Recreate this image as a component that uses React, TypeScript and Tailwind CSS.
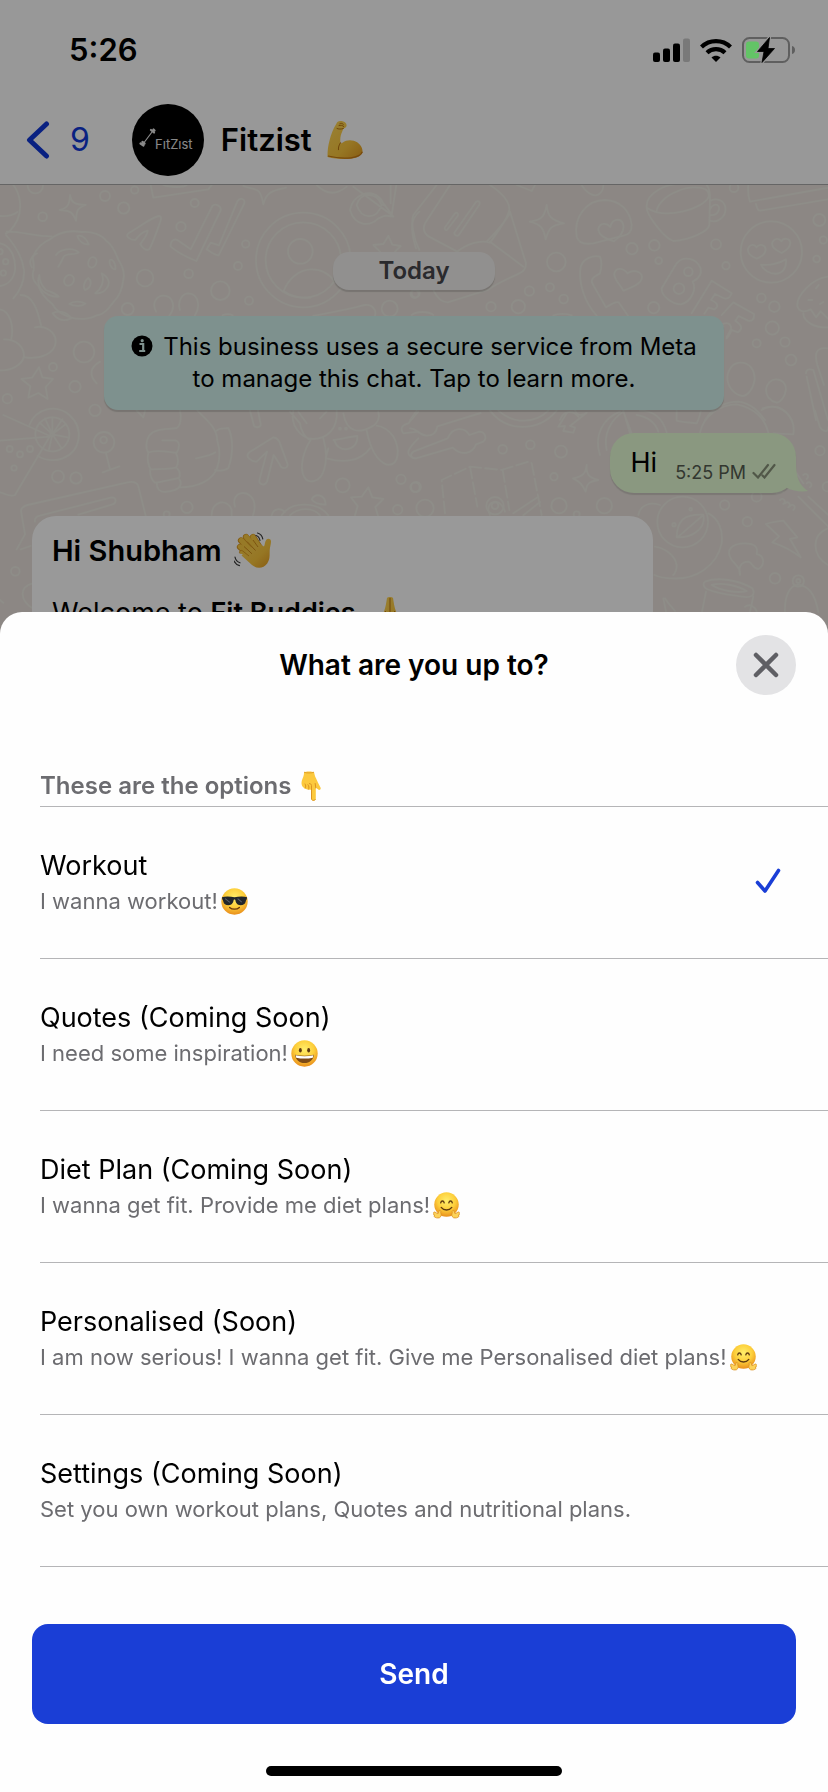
import React, { useState } from "react";

type IconProps = { className?: string };

function EmojiDefs() {
  return (
    <svg width="0" height="0" className="absolute" aria-hidden="true">
      <defs>
        <radialGradient id="face" cx="50%" cy="35%" r="65%">
          <stop offset="0%" stopColor="#ffee6b" />
          <stop offset="55%" stopColor="#fdcf3b" />
          <stop offset="100%" stopColor="#e98f1c" />
        </radialGradient>
        <linearGradient id="skin" x1="0" y1="0" x2="1" y2="1">
          <stop offset="0%" stopColor="#ffd95a" />
          <stop offset="60%" stopColor="#fbc63c" />
          <stop offset="100%" stopColor="#e39a1f" />
        </linearGradient>
      </defs>
    </svg>
  );
}

function Biceps({ className }: IconProps) {
  return (
    <svg viewBox="0 0 36 40" className={className} role="img" aria-label="Flexed biceps">
      <path
        d="M9.5 3.5C10 1.300 12 .6 14.500 1c2.700.4 4.800 1.800 5.100 4 .2 1.900-1.200 3-3.200 3.500-.8 2.500-2 4.600-2.600 7-.6 2.500-.7 5-.3 7.200.5 1 1.200.7 2.300-.2 2.900-2.300 7.200-2.700 11-1.700 4.800 1.300 8.700 5.700 8.700 10.500 0 3.600-4.500 6.700-11.500 7.500-7.500.8-16.500 0-23.500-1.800 0-6.500.6-11.500 2.200-17.200C4 14.800 5.800 9.200 9.500 3.500z"
        fill="url(#skin)"
      />
      <path d="M1 36c7 1.800 15.500 2.600 23 1.800 6.500-.8 10.500-3.300 11.400-6" fill="none" stroke="#c97b14" strokeWidth="1.200" />
      <path d="M10 8.500c1.500.8 4 .8 6.400 0M12.800 3.700c1.200-.8 2.500-.3 3.500.6M13.500 22.700c-1.400 2-2.300 4.500-2.100 7M12 5.500c1.600-.5 3.600-.2 4.800 1" fill="none" stroke="#b9730f" strokeWidth="1" strokeLinecap="round" />
    </svg>
  );
}

function WavingHand({ className }: IconProps) {
  return (
    <svg viewBox="0 0 38 38" className={className} role="img" aria-label="Waving hand">
      <g stroke="#d9951d" strokeWidth="6.200" strokeLinecap="round" strokeLinejoin="round">
        <path d="M16 24L6 15M18 20L7 8.500M22 17L12 5M26 16L19 5" />
      </g>
      <g stroke="#fccb42" strokeWidth="5" strokeLinecap="round">
        <path d="M16 24L6.300 14.800M18 20L7.300 8.300M22 17L12.200 4.900M26 16L19 5" />
      </g>
      <path d="M11 20l13-9 6 3.500c1.200-2 .6-5 2.500-7 1.500-1.400 4-.6 4.400 1.200.5 2-1 6-1.200 9.300-.2 5.500.5 9-2.500 13.500-3.500 5-10.500 5.600-15.200 1.500L7.500 23.500z" fill="url(#skin)" />
      <path d="M6 21.500c-1.500-1.500.5-4 2.500-2.700L15 24" fill="#fccb42" stroke="#d9951d" strokeWidth=".9" />
      <path d="M10 14.500l8 7.300M13 9.500l8.500 9M19 8l5 7" fill="none" stroke="#c98416" strokeWidth=".9" />
      <path d="M22 2.500c2 .5 3.500 2.500 4 5M23.500 0c2.800.8 4.800 3.200 5.300 6M1 24c.5 3 2.500 5 5 5.800M0 28c1.300 2.500 3 4 5.500 4.700" transform="translate(0 1)" fill="none" stroke="#3b3b3b" strokeWidth="1.200" strokeLinecap="round" />
    </svg>
  );
}

function FoldedHands({ className }: IconProps) {
  return (
    <svg viewBox="0 0 20 38" className={className} role="img" aria-label="Folded hands">
      <path d="M7 1c1.300-1.300 4.700-1.300 6 0 .8 5 1.300 9 3 13.500 1.500 4 4 7.500 4 13 0 4-2 7-4 10H4c-2-3-4-6-4-10 0-5.500 2.500-9 4-13C5.700 10 6.200 6 7 1z" fill="url(#skin)" />
      <path d="M10 1v30M5.500 14c-.8 4-2 7-2 10M14.500 14c.8 4 2 7 2 10" fill="none" stroke="#b9730f" strokeWidth="1" />
    </svg>
  );
}

function PointDown({ className }: IconProps) {
  return (
    <svg viewBox="0 0 20 30" className={className} role="img" aria-label="Pointing down">
      <path d="M3 1.200C5 .2 11 .2 13 1.200c.6 2 .8 3.800 2 6 1.200 2.800 2.400 5.200 4.500 9.200.8 1.600-.7 3.200-2.300 2.200l-2.400-2v11c0 2.700-4.300 2.700-4.300 0V18.500c-3 .8-6.500-.3-8.500-2.500C0 13.800.2 10.500 1.500 7.800 2.500 5.600 3.100 3.400 3 1.200z" fill="#fcc93d" />
      <path d="M3 1.200C5 2.200 11 2.200 13 1.200" fill="none" stroke="#e0a02a" strokeWidth="1" />
      <path d="M10.500 18.500V28c0 1.600 3 2.100 4 .4M14.800 17l-.6-4.500M10.500 18.500v-4c-.2-1.300-1-2-2-2M7.500 18.200c.7-1.300.6-3-.5-4.500M4.300 17c.7-1.300.6-2.700-.2-4" fill="none" stroke="#dc9422" strokeWidth="1" strokeLinecap="round" />
    </svg>
  );
}

function Cool({ className }: IconProps) {
  return (
    <svg viewBox="0 0 26 26" className={className} role="img" aria-label="Cool">
      <circle cx="13" cy="13" r="12.700" fill="url(#face)" />
      <path d="M.9 8.800C4 7.800 9 7.800 13 9c4-1.200 9-1.200 12.100-.2l-.3 2c-.6.500-.8 1.200-1 2.200-.5 2.500-2.200 3.500-5 3.500-3.500 0-4.500-2.500-5-5-.2-.6-1.400-.6-1.600 0-.5 2.500-1.500 5-5 5-2.800 0-4.500-1-5-3.500-.2-1-.4-1.700-1-2.200z" fill="#22262b" />
      <path d="M4 10.300l4.500 3.500M16 10.300l4 3.300" stroke="#5b636b" strokeWidth="1" />
      <path d="M8.300 18.700c2.400 2.200 7 2.200 9.400 0" fill="none" stroke="#6b3a0c" strokeWidth="1.300" strokeLinecap="round" />
    </svg>
  );
}

function Grin({ className }: IconProps) {
  return (
    <svg viewBox="0 0 26 26" className={className} role="img" aria-label="Grinning">
      <circle cx="13" cy="13" r="12.700" fill="url(#face)" />
      <ellipse cx="9" cy="9.800" rx="1.400" ry="2.200" fill="#5f3a10" />
      <ellipse cx="17" cy="9.800" rx="1.400" ry="2.200" fill="#5f3a10" />
      <path d="M4 14.200c6 1.300 12 1.300 18 0-.3 4.800-4 8-9 8s-8.700-3.200-9-8z" fill="#7d4a16" />
      <path d="M4.500 14.800c5.500 1.100 11.500 1.100 17 0l-.5 2.200c-5 1.200-11 1.200-16 0z" fill="#fff" />
    </svg>
  );
}

function Hug({ className }: IconProps) {
  return (
    <svg viewBox="0 0 28 28" className={className} role="img" aria-label="Hugging">
      <circle cx="14" cy="13" r="12.700" fill="url(#face)" />
      <path d="M8 11.300c.6-2.600 3-2.600 3.600 0M16.400 11.300c.6-2.600 3-2.600 3.600 0" fill="none" stroke="#5f3a10" strokeWidth="1.400" strokeLinecap="round" />
      <path d="M8.500 16c2.600 3.600 8.400 3.600 11 0" fill="none" stroke="#5f3a10" strokeWidth="1.400" strokeLinecap="round" />
      <g fill="#fcd35a" stroke="#dc8f1e" strokeWidth=".8" strokeLinejoin="round">
        <path d="M6.500 19c1.500-.2 2 1.200 1.500 2.500 1 1.500.5 4.500-1.300 5.200-2 .6-4.500 0-5.500-1.200-.6-.8 0-1.300.6-1.300-1.500-.6-1.800-1.700-1-2.200-.4-1 .3-1.700 1.300-1.100l3 1.700c.8-.8.6-2.500 1.400-3.600z" />
        <path d="M21.500 19c-1.500-.2-2 1.200-1.500 2.500-1 1.500-.5 4.500 1.300 5.200 2 .6 4.500 0 5.500-1.200.6-.8 0-1.300-.6-1.300 1.500-.6 1.800-1.700 1-2.200.4-1-.3-1.700-1.300-1.100l-3 1.700c-.8-.8-.6-2.500-1.400-3.600z" />
      </g>
    </svg>
  );
}

function Dots({ items }: { items: number[][] }) {
  return (
    <>
      {items.map(([x, y, r]) => (
        <circle key={`${x}-${y}-${r}`} cx={x} cy={y} r={r} />
      ))}
    </>
  );
}

function Wallpaper() {
  return (
    <svg
      viewBox="0 185 828 430"
      className="absolute inset-x-0 top-0 w-full"
      aria-hidden="true"
      fill="none"
      stroke="#edebe3"
      strokeWidth="5.500"
      strokeLinecap="round"
      strokeLinejoin="round"
    >
      <g transform="translate(0 180) scale(.33333)">
        <Dots
          items={[
            [106, 17, 23], [128, 110, 13], [315, 48, 15], [371, 84, 17], [404, 30, 11], [543, 140, 14], [584, 69, 12],
            [435, 294, 25], [566, 281, 13], [714, 258, 12], [737, 192, 11], [661, 332, 28], [747, 362, 12], [383, 387, 18],
            [252, 516, 31], [225, 620, 17], [159, 561, 12], [22, 656, 14], [1169, 386, 24], [17, 245, 8], [10, 279, 8], [0, 215, 8],
            [910, 240, 142], [910, 240, 113], [901, 214, 37], [1244, 342, 12],
          ]}
        />
        <path d="M851 333c14-38 48-65 84-65 32 0 55 16 70 38M851 333c20 15 50 22 80 20" />
        <path d="M40 15c20 25 28 70 12 105-12 25-28 40-35 40M0 108c25 2 42-4 52-12M0 190c30 5 48 40 45 80-3 25-20 45-45 48" />
        <path d="M20 155c50 0 90 15 135 14M18 165c35 40 50 70 54 105 2 30-10 60-32 85M62 345c35 0 50 40 62 95" />
        <path d="M105 442c30-8 64 15 62 45-2 32-45 52-92 45M0 388c30 5 42 50 34 88M12 478c40 0 60 25 60 50-5 28-40 45-72 43" />
        <path d="M98 232c10-25 30-45 52-54 25-20 60-28 95-22 30-3 62 8 75 28 22 15 28 40 35 55 10 15 20 40 15 60-3 25-12 50-28 65-15 20-30 40-52 42-20 12-55 14-78 6-25-8-45-20-55-40-20-15-35-35-42-55-15-12-20-30-14-48 2-15-2-28-3-37z" />
        <path d="M168 225c12-18 50-25 68-8-12 10-40 0-46 15-5 12-10 20-15 28M232 168c15-5 30 12 34 25-15 2-30-10-34-25zM330 240c10-5 18 15 16 28-12 0-20-18-16-28zM208 372c12-10 35-8 48-1-12 10-35 8-48 1zM118 285c0 20 10 35 20 45 15 5 35 15 38 20-20 2-45-10-55-25-8-14-8-28-3-40zM305 280c20 10 28 30 15 45-8 12-22 16-34 15 15-10 30-35 19-60zM255 330c-8-10 0-30 10-36 12 10 8 30-10 36zM158 400c15-10 45-5 55 15-20 10-40 5-55-15zM96 262c-12-15-2-35 15-42" />
        <ellipse cx="277" cy="247" rx="12" ry="16" transform="rotate(20 277 247)" />
        <ellipse cx="207" cy="301" rx="14" ry="17" transform="rotate(30 207 301)" />
        <path d="M210 45c5 25 15 28 47 30-28 10-27 20-29 47-10-28-20-30-49-32 25-6 30-18 31-45zM730 18c40 15 50 0 60 55 10-40 30-40 68-50M117 562l10 30 32 5-22 24 6 36-28-18-30 14 6-34-27-22 32-4z" />
        <path d="M388 158c35-20 60-42 88-50 12 0 6 15 2 25-12 35-20 55-30 75-10 6-22-5-27-16 12-16 22-30 22-40-10 2-25 12-37 28-15 0-35-12-18-22z" />
        <path d="M512 200c-2-15 8-25 20-20l40 28 65-130c10-10 30 2 24 15l-72 150c-20-8-50-20-77-43zM632 188l25 8 55-132c10-15 28-5 19 10l-75 152c-12 0-25-12-36-18z" />
        <path d="M452 15l8 38 165-25 10-13M490 15c20 8 60 8 70 0M468 395c-15-30 5-48 22-48 30 0 38 35 18 60M540 390c-10-30 10-50 25-50 32 2 36 40 20 66M668 406c8-5 22-5 30 0" />
        <path d="M950 15c30 30 60 30 90 5M1050 90c10-50 60-60 85-40 10 8 15 15 15 25M1050 90c15 50 60 50 85 25 20-8 15-10 45-5l-45-60M1070 75c10-40 60-40 75 0-15 45-60 45-75 0zM1060 20l115 85 14-90M1172 15v55" />
        <path d="M1165 168l12 26 25 4-17 17M1165 168l-15 24-30 3 20 20M940 407c50-8 110-22 155-32 22-3 35 15 30 32M1258 95c-30 25-25 60-10 110" />
        <path d="M300 545c-35 20-30 45-10 65" />
      </g>
      <g transform="translate(410 180) scale(.33333)">
        <Dots
          items={[
            [666, 206, 17], [733, 196, 16], [439, 246, 28], [746, 242, 10], [358, 333, 14], [420, 322, 12], [461, 357, 13],
            [243, 380, 14], [325, 380, 20], [731, 383, 17], [918, 193, 15], [948, 257, 11], [1054, 354, 13], [1093, 380, 16],
            [1087, 444, 20], [1040, 490, 12], [1125, 486, 14], [1143, 540, 16], [1228, 120, 18], [1240, 180, 11], [1220, 237, 10],
            [972, 23, 13], [1084, 216, 92], [835, 275, 13], [807, 326, 16], [17, 340, 12],
          ]}
        />
        <path d="M80 15L10 105c-8 20 0 70 18 105M120 15L45 130c-8 18 0 32 12 40l85 45M240 15c30 20 60 45 58 75-4 20-30 60-58 98-30-10-70 5-100 28M300 95l48 155c0 15-6 25-20 30-30 15-60 25-95 50l-120 37c-20 0-35-20-42-35M240 185l100 75M230 185c30-30 55-60 70-85" />
        <path d="M105 142l30-42c6-5 12 2 8 8l-32 42c-6 2-8-4-6-8zM133 158l65-92c6-6 14 0 10 8l-62 92c-6 4-14-2-13-8z" />
        <path d="M410 75c3 35 15 45 52 55-40 5-45 15-55 48-6-35-15-45-48-53 35-5 45-15 51-50z" />
        <path d="M500 170c-10-60 30-110 85-110 45 2 75 30 80 75 0 20-10 30-25 32l-90 23c-25 4-45-2-50-20z" />
        <path d="M612 184c-20-5-48-18-47-38 5-18 25-18 36-5 5-25 30-28 38-10 6 18-8 38-27 53zM640 332c-10-20-30-35-27-52 5-18 25-18 40 0 15-12 42-8 43 12-2 20-30 30-56 40z" />
        <path d="M515 15c15 25 40 40 55 25 10-8 10-18 10-25M320 15l45 18 10-18" />
        <path d="M710 80c-2-40 60-70 100-68M890 15c10 10 10 25 10 40l-2 80c-3 20-60 45-108 48-30-10-80-80-80-100 60 40 170 0 185-30 12-40-60-35-95-18-40 15-60 45-60 60M902 62c20-10 40 0 44 20 4 30-25 48-46 40M900 105c-6-20 10-35 22-30 12 8 2 34-22 30z" />
        <path d="M1015 15c-2 18 0 35 5 50l235-42M1038 72c2 10 5 20 12 20l204-34" />
        <path d="M1040 236c-18-6-32-20-24-34 8-12 18-8 24 0 8-12 26-8 27 6 0 12-12 22-27 28zM1115 219c-16-8-34-18-27-34 8-12 20-10 26-1 6-12 26-10 27 5 0 12-12 22-26 30zM1053 254c25 3 50-2 75-16 5 60-60 50-75 16z" />
        <path d="M570 280c5-18 5-38 0-50-20-5-50 5-58 30-8 45 10 105 48 147M570 280c-20 10-30 20-22 32l40 70c15-8 28-20 38-15l28 40" />
        <path d="M755 325l45-75c20-25 60-15 72 15 4 18-8 32-24 40 12 20-2 60-35 68-25 0-60-25-58-48zM845 400l60-98 60 38c-5 15-15 18-25 14l-25-12-12 18c20 8 25 20 10 28l-18-5-12 18M900 410l40 30M950 475c20-20 20-60-18-40M935 405l35-38 62 35c2 18-8 22-18 20l-28-14-10 14c22 15 22 25 8 35l-22-8-12 22" />
        <path d="M1254 290c-50 5-95 60-92 88 5 18 20 20 40 10l16 24 14-18 22 22M1180 400c0 25 35 45 75 42M1195 360h12M1218 325l8-10M1230 372l10-6" />
        <path d="M992 548c30 0 42 25 42 50-4 28-20 50-38 50-25-5-45-30-44-58 3-25 18-42 40-42zM1098 598c20 0 30 15 30 30-3 22-15 38-28 40-20-5-32-20-32-40 3-18 15-30 30-30zM885 720c20-35 60-55 100-55 40 5 60 30 80 55M1055 690c30-20 70-10 90 30M1188 580c0-12 10-14 22-10l44 150M1190 590l28 130M1254 505c-40-5-40 20-32 50l20 60M430 406c15-6 40-6 55 0M5 405c15-12 50-12 65 0M450 720c10-30 40-30 55-10" />
      </g>
      <g transform="translate(0 400) scale(.33333)">
        <Dots
          items={[
            [285, 31, 17], [29, 147, 9], [60, 163, 9], [90, 147, 9], [42, 204, 8], [174, 230, 18], [228, 234, 17], [312, 127, 31],
            [311, 120, 10], [561, 322, 17], [1028, 256, 21], [1203, 238, 14], [1245, 262, 14], [1193, 329, 14], [46, 514, 13],
            [157, 103, 51], [157, 103, 6], [500, 343, 9], [1020, 86, 3], [1038, 86, 3],
          ]}
        />
        <path d="M88 75c20-50 80-65 120-30 45 40 35 110-20 130-25 10-60 5-75-8M157 103V52M157 103l40-30M157 103l50 10M157 103l28 42M157 103l-10 45M157 103l-38-35M157 103l-22-48M157 103l30-45" />
        <path d="M10 45L150 108 45 285c-15 8-30-5-45-8M0 122l150-12M318 160l12 48M308 217l50-18" />
        <path d="M50 448l25-45-12-70c0-10 10-15 20-18l300-68c15-3 28 0 32 12l22 88M105 365c-2-12 5-16 15-18l215-55c15 0 16 18 0 22l-100 30M62 448l30-10" />
        <path d="M540 32c5 20 2 45-10 52-30 5-65 0-82 22-10 15-12 40-3 52 20-10 60-2 85 0 10-15 10-35-5-37h-38M445 158c-5 20 0 40 8 50 20 0 50 0 75-5 8-10 8-30 0-43M450 210c0 20 5 30 15 38 20-2 50-10 72-14 5-10 2-20-5-28M470 248c0 20 10 28 25 28 20-2 40-8 45-18 4-8 2-15-2-20M540 262c50 0 100-20 112-60 10-30 6-60 0-80-2-40-30-60-60-90M588 175c25-5 45-8 58-18M650 92c10-10 25-5 35-8 15 30 15 80 0 120-12 10-30 8-40 6" />
        <path d="M770 185c-15 0-38-15-22-28l70-44c10-3 15 5 20 12l25 68c0 15-18 15-24 0l-18-28-20 80c-8 15-28 8-22-8l22-82zM750 32l12 45c5 8 22 5 20-5l-8-40M410 32l20 20 5-20" />
        <path d="M880 32c-10 40 20 85 60 85M900 70c2 20 15 45 32 50-20 30-35 80-20 110 15 25 50 15 60-20 10-30 5-70-2-95M870 35l30 35M940 117c40 0 75-30 70-85M895 35l25 35M980 35l-20 20M1030 40c10 60 50 60 85 40 20-10 25-30 20-45M1000 120c20-2 50-10 72-12 2 50-60 50-68 15zM980 175c50 15 100 10 130-30M985 145l-8 30M1100 92c10 50 30 90 60 102 40 5 40-50 20-85-15-20-35-30-50-32M1255 35l-30 35c-20 5-25 15-15 30l45-5M1255 115c-30 30-45 50-10 60" />
        <path d="M1105 262l12 30 33 5-24 24 8 26M1105 262l-20 28-32 2 20 26-8 28M635 345c0-45 50-50 60-15v16M705 320c-15-50 50-55 58-10 2 15 0 25-4 36M845 346c30-45 110-40 140 0M870 346c25-25 70-25 90 0M935 298c10-18 40-18 42 16-20 0-35-5-42-16zM815 346c5-20 25-25 40-10M98 550c-40 10-40 50 0 75M0 600l10 8" />
      </g>
      <g transform="translate(410 400) scale(.33333)">
        <Dots
          items={[
            [278, 148, 13], [361, 134, 13], [453, 155, 18], [432, 230, 11], [18, 261, 15], [45, 325, 26], [447, 317, 23],
            [583, 317, 23], [255, 317, 26], [255, 317, 10], [944, 315, 14], [1040, 290, 15], [1012, 365, 14], [1095, 535, 16],
            [1230, 152, 14], [842, 328, 4], [792, 374, 5], [1165, 543, 17], [1165, 543, 6], [1252, 260, 14], [818, 366, 76], [500, 343, 9],
          ]}
        />
        <path d="M0 85c20-2 22 20 50 22 20 0 30-12 32-28l130-40M0 60l20-28M10 155c-10 8-10 20 8 20l110-32c25 25 60 20 70-10l22-8c12-10 5-30-12-30l-30 10c-15-25-50-25-65 10z" />
        <path d="M105 340l-10-100 85-40 95 10 80-25c8 0 12 5 12 15l28 145M180 200l22 120M278 210l20 120" strokeDasharray="36 12" />
        <path d="M310 340l75-50M340 346l50-40M240 345c-20-40 30-60 45-10M530 195c-2 30 8 38 35 45-30 5-35 12-38 35-10-22-18-30-38-40 30-5 38-15 41-40z" />
        <path d="M240 32c50 65 145 65 200 0M265 32c45 40 110 40 150 0M470 40l-25 40 20-2-5 15 30 5 5-15-15-5 50-40c-15 10-30 10-35-8" />
        <path d="M570 165c-20-60 10-110 60-130M590 150c-10-45 10-90 50-115l25 65M690 32c50 0 70 30 80 65M680 45c30 5 55 20 65 50M640 32l20 68" />
        <path d="M870 98c10-50 60-85 110-85 50 10 85 40 95 85M800 32v30c15 5 40 5 60 8 5-12 10-20 12-35M1058 25c60-20 100 30 92 78l-60-3M1215 32l15 50c10 15 25 15 25 0" />
        <path d="M750 315c-30-10-60 0-65 30M895 340c30 15 45 50 40 90-15 70-80 110-150 105-20 0-40-5-52-10M735 440c30 5 60 25 65 55 0 15-5 25-10 30M800 412c2-50 20-70 80-68 8 40-30 70-80 68zM805 410l75-65" />
        <path d="M1068 372c15-5 35-8 52-10l42 50-22 5 32 55c-25-20-55-35-85-45l20-18zM990 525c2-18-10-28-25-45-20-30 0-50 40-50 30 0 40 12 35 32 25 5 25 35 5 45-20-2-15-18-30-22-25 0-30 20-25 40zM1160 220l20 30M1100 280l20-5M1165 290l90 90M1195 290l60 55M1110 300c10-10 20 5 10 12M1125 310c10-10 20 5 10 12M1140 318c10-10 20 5 10 12M1180 225c10-10 20 5 10 12M1190 250c10-10 20 5 10 12M1254 385c-50 20-50 80 0 110" />
        <path d="M885 545c40-15 100-5 142 20 12 20-5 30-30 25-40-5-85-10-110-25-8-8-8-15-2-20zM905 555c30-8 75 0 105 18-30 8-80-2-105-18zM888 575l-12 60M1030 590l-10 45M1125 636c-2-50 15-80 40-82 30 5 50 25 60 82M1005 620c15-10 30 0 35 14M760 595l8 40M765 595c15 25 25 30 30 38" />
      </g>
    </svg>
  );
}

function StatusBar() {
  return (
    <div className="relative z-20 flex h-24 items-center justify-between pt-1 pr-[33px] pl-[69px]">
      <span className="text-[31px] leading-10 font-semibold">5:26</span>
      <div className="flex items-center gap-[10px]">
        <svg viewBox="0 0 37 24" className="h-6 w-[37px]" role="img" aria-label="Signal: three of four bars">
          <rect x="0" y="14.500" width="7" height="9.500" rx="2" />
          <rect x="10" y="10.500" width="7" height="13.500" rx="2" />
          <rect x="20" y="5.500" width="7" height="18.500" rx="2" />
          <rect x="30" y="0.500" width="7" height="23.500" rx="2" fill="#797979" />
        </svg>
        <svg viewBox="0 0 32 24" className="h-6 w-8" role="img" aria-label="Wi-Fi" fill="none" stroke="#000" strokeWidth="4.200">
          <path d="M1.500 9c8-7.800 21-7.800 29 0" />
          <path d="M7 14.800c5-4.800 13-4.800 18 0" />
          <path d="M11.500 19.600c2.600-2.500 6.400-2.500 9 0L16 24z" fill="#000" stroke="none" />
        </svg>
        <svg viewBox="0 0 53 26" className="h-[26px] w-[53px]" role="img" aria-label="Battery charging">
          <rect x="1" y="1" width="46" height="24" rx="6.500" fill="none" stroke="#5f5f5f" strokeWidth="2" />
          <path d="M50 9c2 .5 3 2 3 4s-1 3.500-3 4z" fill="#5f5f5f" />
          <rect x="4" y="4.500" width="13" height="17" rx="3" fill="#63c466" />
          <path d="M27.500.5L15.500 14.500h6.500L20 25.500 32.500 11.500H26z" fill="#000" stroke="#989898" strokeWidth="3" />
          <path d="M27.500.5L15.500 14.500h6.500L20 25.500 32.500 11.500H26z" fill="#000" stroke="#000" strokeWidth=".8" strokeLinejoin="round" />
        </svg>
      </div>
    </div>
  );
}

function ChatHeader() {
  return (
    <div className="flex items-center px-[26px] pt-2 pb-2">
      <button type="button" className="flex items-center text-[#1038d8]" aria-label="Back, 9 unread chats">
        <svg viewBox="0 0 24 38" className="h-[38px] w-6" fill="none" stroke="currentColor" strokeWidth="5" strokeLinecap="round" strokeLinejoin="round">
          <path d="M20.500 3L3.500 19l17 16" />
        </svg>
        <span className="ml-5 text-[32px] leading-10">9</span>
      </button>
      <div className="ml-[42px] flex size-[72px] items-center justify-center rounded-full bg-black">
        <div className="relative pt-1 pl-2">
          <svg viewBox="0 0 18 20" className="absolute top-0 -left-1 h-5 w-[18px]" fill="none" stroke="#e4e4e4" strokeLinecap="round" aria-hidden="true">
            <path d="M4 16L13 4" strokeWidth="1.200" />
            <path d="M1.500 15.500l3 2M3.500 14l2 1.500M12 2l3 2.500M14.500 1.500l1 1" strokeWidth="2.200" />
          </svg>
          <span className="block pt-1 pl-1 text-[13px] leading-4 text-[#e4e4e4]">FıtZıst</span>
        </div>
      </div>
      <h1 className="ml-[17px] text-[31px] leading-10 font-semibold">Fitzist</h1>
      <Biceps className="ml-[15px] h-10 w-9" />
    </div>
  );
}

function Chat() {
  return (
    <main className="relative flex grow flex-col overflow-hidden bg-[#e9e2dc] pt-[67px]">
      <Wallpaper />
      <div className="relative flex flex-col">
        <div className="self-center rounded-2xl bg-[#f2f0ef] px-[45px] py-[3px] text-[24px] leading-8 font-semibold text-[#47474b] shadow-[0_2px_1px_rgba(0,0,0,0.15)]">
          Today
        </div>
        <p className="mx-[104px] mt-[26px] rounded-[14px] bg-[#d2f2ed] px-6 py-[15px] text-center text-[24px] leading-8 shadow-[0_2px_1px_rgba(0,0,0,0.15)]">
          <svg viewBox="0 0 22 22" className="mr-[10px] mb-1 inline size-[22px]" role="img" aria-label="Info">
            <circle cx="11" cy="11" r="10.500" />
            <path d="M8.500 9h3.700v7M8.200 16h6" fill="none" stroke="#d2f2ed" strokeWidth="2.200" />
            <circle cx="11.200" cy="5.700" r="1.600" fill="#d2f2ed" />
          </svg>
          This business uses a secure service from Meta to manage this chat. Tap to learn more.
        </p>
        <div className="relative mt-[23px] mr-8 flex h-[60px] items-center self-end rounded-[24px] bg-[#e6fdd5] pr-5 pl-[21px] shadow-[0_2px_1px_rgba(0,0,0,0.12)]">
          <svg viewBox="0 0 30 30" className="absolute -right-3 bottom-0 size-[30px]" aria-hidden="true">
            <path d="M18 0c0 14 3 22 12 28-7 1-15 0-21-3L0 20V0z" fill="#e6fdd5" />
          </svg>
          <span className="text-[27px] leading-9">Hi</span>
          <span className="relative mt-5 ml-[18px] text-[18px] leading-6 text-[#555c50]">5:25 PM</span>
          <svg viewBox="0 0 24 16" className="relative mt-4 ml-[6px] h-4 w-6" fill="none" stroke="#879279" strokeWidth="2.200" strokeLinecap="round" role="img" aria-label="Delivered">
            <path d="M1.500 10l4.500 4.500L16 2M10.500 12.500l2 2L22.500 2" />
          </svg>
        </div>
        <article className="mt-[23px] ml-8 w-3/4 rounded-[24px] bg-white px-5 pt-[15px] pb-40">
          <h2 className="flex items-center text-[29px] leading-10 font-semibold">
            Hi Shubham
            <WavingHand className="ml-3 size-[38px]" />
          </h2>
          <p className="mt-5 flex items-center text-[27px] leading-10">
            <span>
              Welcome to <b className="font-semibold">Fit Buddies</b>
            </span>
            <FoldedHands className="mt-[6px] ml-6 h-[38px] w-5" />
          </p>
        </article>
      </div>
    </main>
  );
}

const options = [
  { id: "workout", title: "Workout", note: "I wanna workout!", Emoji: Cool },
  { id: "quotes", title: "Quotes (Coming Soon)", note: "I need some inspiration!", Emoji: Grin },
  { id: "diet", title: "Diet Plan (Coming Soon)", note: "I wanna get fit. Provide me diet plans!", Emoji: Hug },
  {
    id: "personalised",
    title: "Personalised (Soon)",
    note: "I am now serious! I wanna get fit. Give me Personalised diet plans!",
    Emoji: Hug,
  },
  { id: "settings", title: "Settings (Coming Soon)", note: "Set you own workout plans, Quotes and nutritional plans.", Emoji: null },
];

function OptionsSheet() {
  const [selected, setSelected] = useState("workout");
  return (
    <section role="dialog" aria-labelledby="sheet-title" className="fixed inset-x-0 bottom-0 z-30 flex flex-col rounded-t-[22px] bg-[#fefefe]">
      <header className="grid grid-cols-[60px_1fr_60px] items-center px-8 pt-[23px]">
        <h2 id="sheet-title" className="col-start-2 text-center text-[28px] leading-10 font-semibold">
          What are you up to?
        </h2>
        <button type="button" aria-label="Close" className="flex size-[60px] items-center justify-center rounded-full bg-[#e3e3e5]">
          <svg viewBox="0 0 26 26" className="size-[26px]" fill="none" stroke="#5f5f64" strokeWidth="4.500" strokeLinecap="round">
            <path d="M3 3l20 20M23 3L3 23" />
          </svg>
        </button>
      </header>
      <fieldset className="mt-[75px] ml-10">
        <legend className="flex w-full items-center border-b border-[#b5b5b7] pb-1 text-[24px] leading-8 font-semibold text-[#6c6c70]">
          These are the options
          <PointDown className="ml-[10px] h-[30px] w-5" />
        </legend>
        {options.map(({ id, title, note, Emoji }) => (
          <label key={id} className="flex items-center justify-between border-b border-[#b5b5b7] pt-[39px] pr-[47px] pb-[42px]">
            <input type="radio" name="option" value={id} checked={selected === id} onChange={() => setSelected(id)} className="sr-only" />
            <span className="flex flex-col">
              <span className="text-[27px] leading-10">{title}</span>
              <span className="flex items-center text-[22px] leading-[30px] whitespace-nowrap text-[#6c6c70]">
                {note}
                {Emoji && <Emoji className="ml-[3px] size-[27px]" />}
              </span>
            </span>
            {selected === id && (
              <svg viewBox="0 0 26 26" className="size-[26px] shrink-0" fill="none" stroke="#1a3ed6" strokeWidth="3.600" strokeLinecap="round" strokeLinejoin="round" aria-hidden="true">
                <path d="M2.500 14.500l7.500 8.500L23.500 2.500" />
              </svg>
            )}
          </label>
        ))}
      </fieldset>
      <button type="button" className="mx-8 mt-[57px] rounded-2xl bg-[#1a3ed6] py-[30px] text-[28px] leading-10 font-semibold text-white">
        Send
      </button>
      <div className="mt-[42px] mb-4 h-[10px] w-[296px] self-center rounded-full bg-black" />
    </section>
  );
}

export default function App() {
  return (
    <div className="relative flex h-screen flex-col overflow-hidden bg-[#989898] font-[Inter,'Liberation_Sans',sans-serif] text-black">
      <EmojiDefs />
      <div className="absolute inset-0 z-10 bg-black/40" aria-hidden="true" />
      <div className="border-b border-[#a8a8a8] bg-[#fdfdfd]">
        <StatusBar />
        <ChatHeader />
      </div>
      <Chat />
      <OptionsSheet />
    </div>
  );
}
